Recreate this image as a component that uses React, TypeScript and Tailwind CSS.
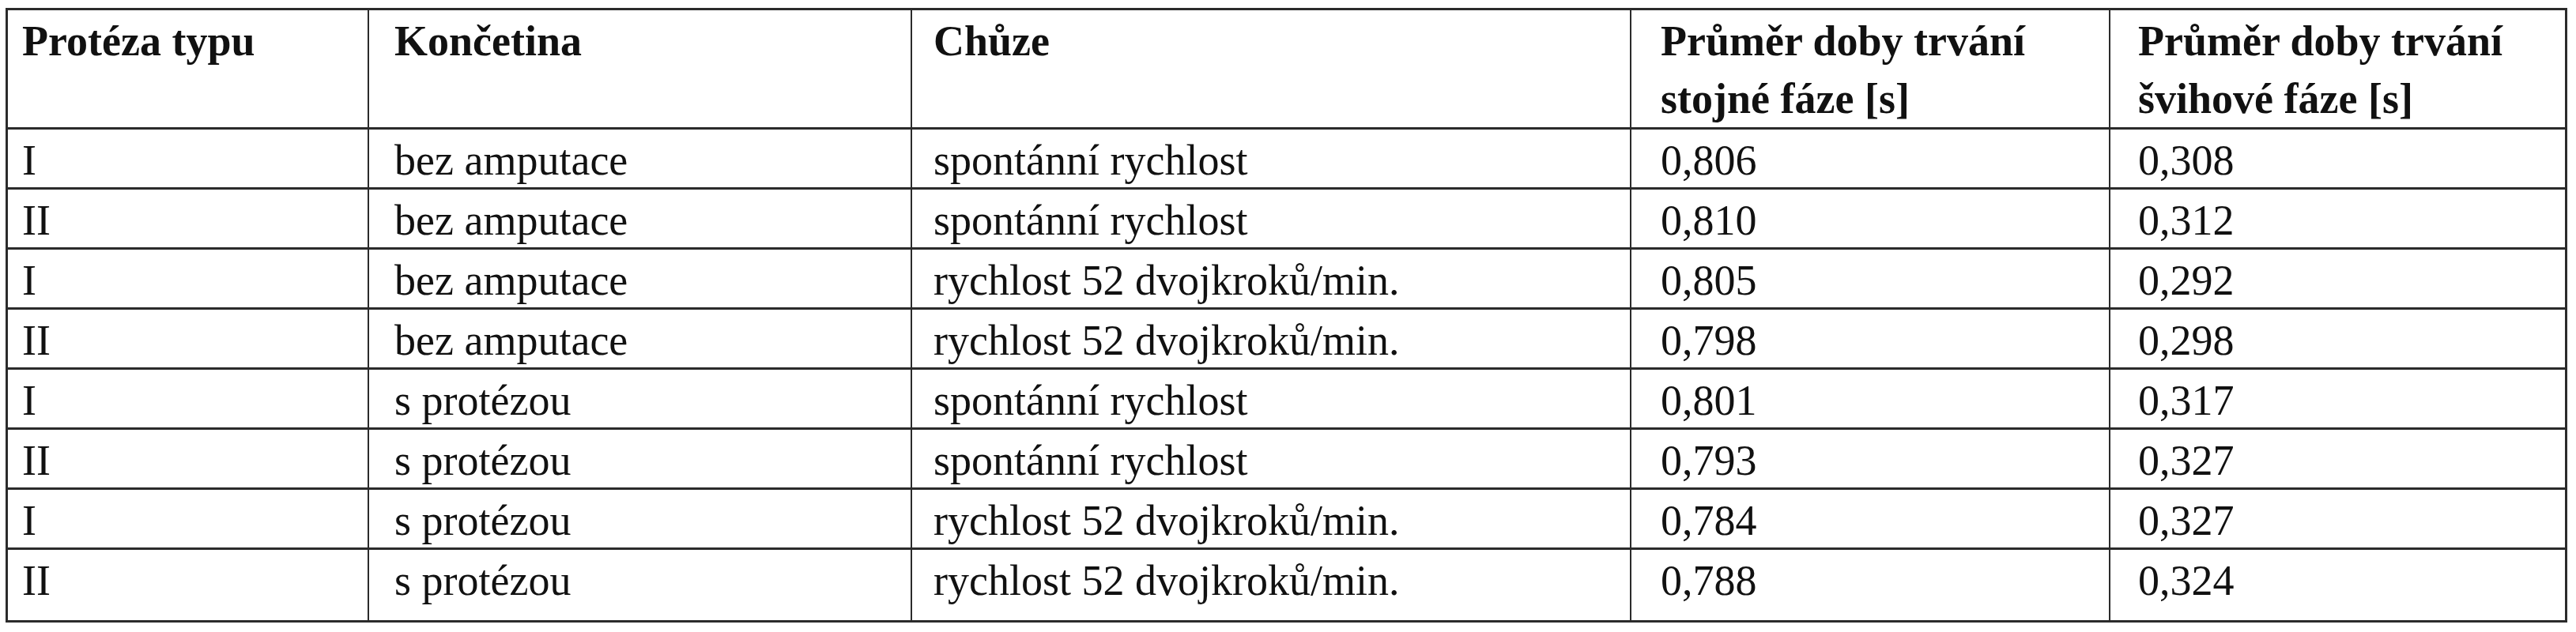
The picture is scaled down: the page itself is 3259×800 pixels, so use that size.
const header = [
  "Protéza typu",
  "Končetina",
  "Chůze",
  ["Průměr doby trvání", "stojné fáze [s]"],
  ["Průměr doby trvání", "švihové fáze [s]"],
];

const rows = [
  ["I", "bez amputace", "spontánní rychlost", "0,806", "0,308"],
  ["II", "bez amputace", "spontánní rychlost", "0,810", "0,312"],
  ["I", "bez amputace", "rychlost 52 dvojkroků/min.", "0,805", "0,292"],
  ["II", "bez amputace", "rychlost 52 dvojkroků/min.", "0,798", "0,298"],
  ["I", "s protézou", "spontánní rychlost", "0,801", "0,317"],
  ["II", "s protézou", "spontánní rychlost", "0,793", "0,327"],
  ["I", "s protézou", "rychlost 52 dvojkroků/min.", "0,784", "0,327"],
  ["II", "s protézou", "rychlost 52 dvojkroků/min.", "0,788", "0,324"],
];

// left padding per column, taken from the reference
const pads = ["pl-[18px]", "pl-[32px]", "pl-[27px]", "pl-[37px]", "pl-[35px]"];

const cols = "grid grid-cols-[457px_687px_910px_606px_575px]";

const Cell = ({ i, children }: { i: number; children: React.ReactNode }) => (
  <div
    className={`${pads[i]} pt-[3px] leading-[73px] whitespace-nowrap ${
      i < 4 ? "border-r-2 border-[#2b2b2b]" : ""
    }`}
  >
    {children}
  </div>
);

const App = () => {
  return (
    <div className="min-h-screen bg-white pt-[10px] pl-[7px]">
      <div
        className="w-[3241px] border-[3px] border-[#2b2b2b] text-[54px] text-[#111]"
        style={{ fontFamily: '"Liberation Serif", "Times New Roman", serif' }}
      >
        <div className={`${cols} h-[151px] border-b-[3px] border-[#2b2b2b] font-bold`}>
          {header.map((h, i) => (
            <Cell key={i} i={i}>
              {Array.isArray(h) ? (
                <>
                  {h[0]}
                  <br />
                  {h[1]}
                </>
              ) : (
                h
              )}
            </Cell>
          ))}
        </div>
        {rows.map((r, ri) => {
          const last = ri === rows.length - 1;
          return (
            <div
              key={ri}
              className={`${cols} ${last ? "h-[89px]" : "h-[76px] border-b-[3px] border-[#2b2b2b]"}`}
            >
              {r.map((c, i) => (
                <Cell key={i} i={i}>
                  {c}
                </Cell>
              ))}
            </div>
          );
        })}
      </div>
    </div>
  );
};

export default App;
